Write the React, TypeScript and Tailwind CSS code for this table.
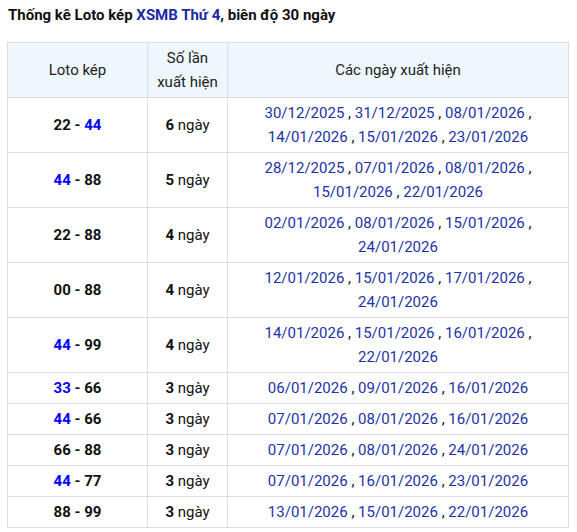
const rows: { a: string; b: string; blueA?: boolean; blueB?: boolean; n: number; dates: string[] }[] = [
  { a: "22", b: "44", blueB: true, n: 6, dates: ["30/12/2025", "31/12/2025", "08/01/2026", "14/01/2026", "15/01/2026", "23/01/2026"] },
  { a: "44", b: "88", blueA: true, n: 5, dates: ["28/12/2025", "07/01/2026", "08/01/2026", "15/01/2026", "22/01/2026"] },
  { a: "22", b: "88", n: 4, dates: ["02/01/2026", "08/01/2026", "15/01/2026", "24/01/2026"] },
  { a: "00", b: "88", n: 4, dates: ["12/01/2026", "15/01/2026", "17/01/2026", "24/01/2026"] },
  { a: "44", b: "99", blueA: true, n: 4, dates: ["14/01/2026", "15/01/2026", "16/01/2026", "22/01/2026"] },
  { a: "33", b: "66", blueA: true, n: 3, dates: ["06/01/2026", "09/01/2026", "16/01/2026"] },
  { a: "44", b: "66", blueA: true, n: 3, dates: ["07/01/2026", "08/01/2026", "16/01/2026"] },
  { a: "66", b: "88", n: 3, dates: ["07/01/2026", "08/01/2026", "24/01/2026"] },
  { a: "44", b: "77", blueA: true, n: 3, dates: ["07/01/2026", "16/01/2026", "23/01/2026"] },
  { a: "88", b: "99", n: 3, dates: ["13/01/2026", "15/01/2026", "22/01/2026"] },
];

export default function App() {
  return (
    <div className="bg-white px-[7px] pt-[4px] font-['Roboto',sans-serif] text-[15px] text-[#111]">
      <h2 className="pl-px text-[15px] font-bold leading-[22px]">
        Thống kê Loto kép <span className="text-[#1b2ba3]">XSMB Thứ 4</span>, biên độ 30 ngày
      </h2>
      <table className="mt-[16px] w-[562px] table-fixed border-collapse text-center leading-[24px]">
        <colgroup>
          <col className="w-[140px]" />
          <col className="w-[80px]" />
          <col />
        </colgroup>
        <thead>
          <tr className="bg-[#eef6fe] text-[#222]">
            <th className="border border-[#dddddd] px-1 py-[3px] font-normal">Loto kép</th>
            <th className="border border-[#dddddd] px-1 py-[3px] font-normal">Số lần xuất hiện</th>
            <th className="border border-[#dddddd] px-1 py-[3px] font-normal">Các ngày xuất hiện</th>
          </tr>
        </thead>
        <tbody>
          {rows.map((r, i) => (
            <tr key={i}>
              <td className="border border-[#dddddd] px-1 py-[3px] font-bold">
                <span className={r.blueA ? "text-[#0000ff]" : ""}>{r.a}</span>
                {" - "}
                <span className={r.blueB ? "text-[#0000ff]" : ""}>{r.b}</span>
              </td>
              <td className="border border-[#dddddd] px-1 py-[3px]">
                <b>{r.n}</b> ngày
              </td>
              <td className="border border-[#dddddd] px-[12px] py-[3px] text-[#1c33a6]">
                {r.dates.map((d, j) => (
                  <span key={j}>
                    {d}
                    {j < r.dates.length - 1 && <span className="text-[#111]"> , </span>}
                  </span>
                ))}
              </td>
            </tr>
          ))}
        </tbody>
      </table>
    </div>
  );
}
